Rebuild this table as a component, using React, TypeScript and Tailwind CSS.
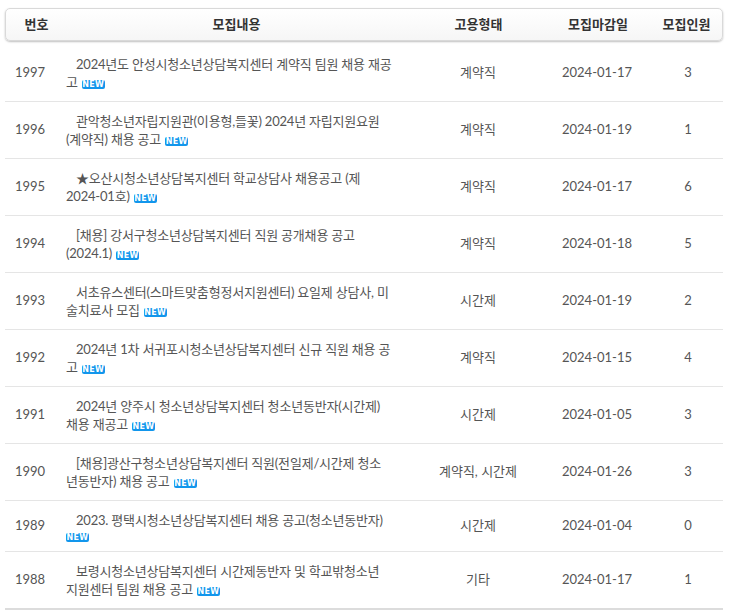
import React from "react";

type Row = {
  no: number;
  lines: string[];
  badgeOwnLine?: boolean;
  type: string;
  date: string;
  count: number;
};

const rows: Row[] = [
  { no: 1997, lines: ["2024년도 안성시청소년상담복지센터 계약직 팀원 채용 재공", "고"], type: "계약직", date: "2024-01-17", count: 3 },
  { no: 1996, lines: ["관악청소년자립지원관(이용형,들꽃) 2024년 자립지원요원", "(계약직) 채용 공고"], type: "계약직", date: "2024-01-19", count: 1 },
  { no: 1995, lines: ["★오산시청소년상담복지센터 학교상담사 채용공고 (제", "2024-01호)"], type: "계약직", date: "2024-01-17", count: 6 },
  { no: 1994, lines: ["[채용] 강서구청소년상담복지센터 직원 공개채용 공고", "(2024.1)"], type: "계약직", date: "2024-01-18", count: 5 },
  { no: 1993, lines: ["서초유스센터(스마트맞춤형정서지원센터) 요일제 상담사, 미", "술치료사 모집"], type: "시간제", date: "2024-01-19", count: 2 },
  { no: 1992, lines: ["2024년 1차 서귀포시청소년상담복지센터 신규 직원 채용 공", "고"], type: "계약직", date: "2024-01-15", count: 4 },
  { no: 1991, lines: ["2024년 양주시 청소년상담복지센터 청소년동반자(시간제)", "채용 재공고"], type: "시간제", date: "2024-01-05", count: 3 },
  { no: 1990, lines: ["[채용]광산구청소년상담복지센터 직원(전일제/시간제 청소", "년동반자) 채용 공고"], type: "계약직, 시간제", date: "2024-01-26", count: 3 },
  { no: 1989, lines: ["2023. 평택시청소년상담복지센터 채용 공고(청소년동반자)"], badgeOwnLine: true, type: "시간제", date: "2024-01-04", count: 0 },
  { no: 1988, lines: ["보령시청소년상담복지센터 시간제동반자 및 학교밖청소년", "지원센터 팀원 채용 공고"], type: "기타", date: "2024-01-17", count: 1 },
];

function NewBadge() {
  return (
    <span
      className="inline-block align-middle ml-[4px] h-[9px] w-[23px] rounded-[2px] bg-[#1296ec] text-white text-[8px] leading-[9px] font-bold text-center tracking-[0.3px] relative top-[1px]"
      style={{ fontFamily: '"DejaVu Sans", sans-serif' }}
    >
      NEW
    </span>
  );
}

export default function App() {
  const font = { fontFamily: 'Lato, "Noto Sans CJK KR", sans-serif' };
  return (
    <div className="w-[729px] h-[615px] bg-white pt-[8px] pl-[5px] pr-[6px]" style={font}>
      <div className="grid grid-cols-[61px_339px_145px_94px_79px] h-[33px] items-center rounded-[5px] border border-[#d9d9d9] bg-gradient-to-b from-white to-[#f6f6f6] shadow-[0_1px_2px_rgba(0,0,0,0.25)] text-[13px] font-bold text-[#333]">
        <div className="text-center">번호</div>
        <div className="text-center">모집내용</div>
        <div className="text-center">고용형태</div>
        <div className="text-center">모집마감일</div>
        <div className="text-center pl-[4px]">모집인원</div>
      </div>
      <div className="mt-[4px]">
        {rows.map((r, i) => (
          <div
            key={r.no}
            className={`grid grid-cols-[50px_355px_136px_102px_75px] items-center text-[13px] text-[#555] ${
              i === rows.length - 1 ? "border-b-2 border-[#dcdcdc]" : "border-b border-[#e5e5e5]"
            } py-[10px]`}
          >
            <div className="text-center">{r.no}</div>
            <div className="pl-[11px] leading-[18px] whitespace-nowrap tracking-[-0.2px]">
              <div className="indent-[10px]">{r.lines[0]}</div>
              {r.lines.length > 1 && (
                <div>
                  {r.lines[1]}
                  <NewBadge />
                </div>
              )}
              {r.badgeOwnLine && (
                <div className="h-[12px] leading-[12px] -ml-[4px]">
                  <NewBadge />
                </div>
              )}
            </div>
            <div className="text-center">{r.type}</div>
            <div className="text-center">{r.date}</div>
            <div className="text-center pl-[5px]">{r.count}</div>
          </div>
        ))}
      </div>
    </div>
  );
}
